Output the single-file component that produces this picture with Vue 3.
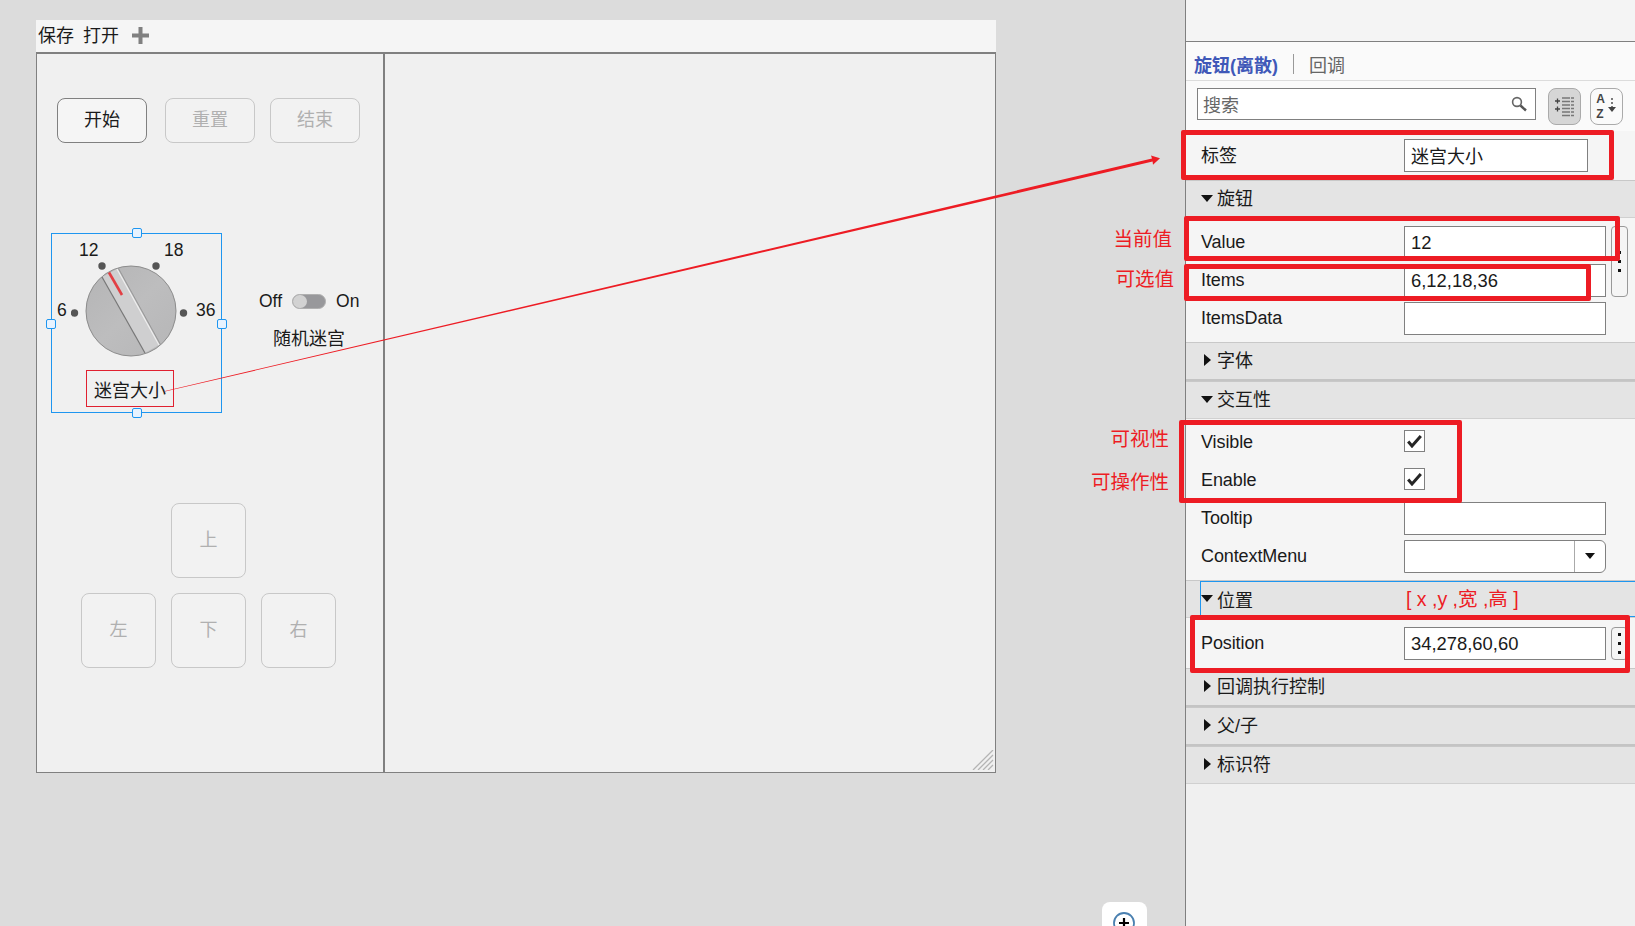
<script setup>
const redBoxes = [
  { left: 1181, top: 130, width: 433, height: 50 },
  { left: 1184, top: 216, width: 436, height: 45 },
  { left: 1184, top: 264, width: 407, height: 37 },
  { left: 1179, top: 420, width: 283, height: 83 },
  { left: 1190, top: 615, width: 440, height: 58 }
]

const notes = [
  { text: '当前值', right: 463, top: 225 },
  { text: '可选值', right: 461, top: 265 },
  { text: '可视性', right: 466, top: 425 },
  { text: '可操作性', right: 466, top: 468 }
]

const closedSections = ['回调执行控制', '父/子']

const boxStyle = (b) => ({
  left: b.left + 'px',
  top: b.top + 'px',
  width: b.width + 'px',
  height: b.height + 'px'
})
</script>

<template>
  <div class="page">
    <div class="workspace">
      <div class="toolbar">
        <span>保存</span>
        <span>打开</span>
        <svg class="plus" width="17" height="17" viewBox="0 0 17 17">
          <path d="M6.5 0h4v6.5H17v4h-6.5V17h-4v-6.5H0v-4h6.5z" fill="#808080" />
        </svg>
      </div>
      <div class="window">
        <div class="left-pane">
          <div class="action-row">
            <button class="btn active">开始</button>
            <button class="btn">重置</button>
            <button class="btn">结束</button>
          </div>
          <div class="control-row">
            <div class="knob-box">
              <i class="handle h-top"></i>
              <i class="handle h-bottom"></i>
              <i class="handle h-left"></i>
              <i class="handle h-right"></i>
              <span class="tick t12">12</span>
              <span class="tick t18">18</span>
              <span class="tick t6">6</span>
              <span class="tick t36">36</span>
              <svg class="knob" width="120" height="104" viewBox="0 0 120 104">
                <defs>
                  <clipPath id="dial"><circle cx="60" cy="57" r="45" /></clipPath>
                  <linearGradient id="dialFill" x1="0" y1="0" x2="1" y2="1">
                    <stop offset="0" stop-color="#b4b4b5" />
                    <stop offset="0.5" stop-color="#bdbdbe" />
                    <stop offset="1" stop-color="#b6b6b7" />
                  </linearGradient>
                </defs>
                <circle cx="3.5" cy="59" r="3.7" fill="#555" />
                <circle cx="31" cy="12" r="3.7" fill="#555" />
                <circle cx="85" cy="12" r="3.7" fill="#555" />
                <circle cx="112.5" cy="59" r="3.7" fill="#555" />
                <circle cx="60" cy="57" r="45" fill="url(#dialFill)" stroke="#8c8c8c" />
                <g clip-path="url(#dial)">
                  <polygon points="31,23 46,15 88,91 74,99" fill="#cfcfd0" />
                  <line x1="31" y1="23" x2="74" y2="99" stroke="#777" stroke-width="1.2" />
                  <line x1="46" y1="15" x2="88" y2="91" stroke="#efefef" stroke-width="1.2" />
                  <line x1="47.5" y1="14.5" x2="89.5" y2="90.5" stroke="#8e8e8e" stroke-width="0.8" />
                </g>
                <line x1="38" y1="18.5" x2="51" y2="41" stroke="#e23f44" stroke-width="2.6" />
              </svg>
              <div class="knob-label">迷宫大小</div>
            </div>
            <div class="switch-block">
              <div class="switch-line">
                <span>Off</span>
                <span class="switch"><span class="switch-thumb"></span></span>
                <span>On</span>
              </div>
              <div class="switch-label">随机迷宫</div>
            </div>
          </div>
          <div class="dpad">
            <button class="btn pad up">上</button>
            <button class="btn pad lf">左</button>
            <button class="btn pad dn">下</button>
            <button class="btn pad rt">右</button>
          </div>
        </div>
        <div class="right-pane">
          <svg class="grip" width="22" height="20" viewBox="0 0 22 20">
            <path d="M1 20L21 0M6 20L21 5M11 20L21 10M16 20L21 15" stroke="#b4b4b4" stroke-width="1.3" fill="none" />
          </svg>
        </div>
      </div>
      <div class="zoom-tab">
        <svg width="24" height="24" viewBox="0 0 24 24">
          <circle cx="12" cy="12" r="10" fill="#fff" stroke="#4a80b0" stroke-width="1.8" />
          <path d="M12 7v10M7 12h10" stroke="#000" stroke-width="2.2" />
        </svg>
      </div>
    </div>

    <aside class="inspector">
      <div class="insp-top"></div>
      <div class="tabs">
        <span class="tab-on">旋钮(离散)</span>
        <i class="tab-sep"></i>
        <span class="tab-off">回调</span>
      </div>
      <div class="search-row">
        <div class="search">
          <span>搜索</span>
          <svg width="16" height="16" viewBox="0 0 16 16">
            <circle cx="6" cy="6" r="4.4" fill="#fff" stroke="#666" stroke-width="1.6" />
            <path d="M9.5 9.5L15 14.5" stroke="#555" stroke-width="2.4" />
          </svg>
        </div>
        <div class="tool-btn pressed">
          <svg width="20" height="20" viewBox="0 0 20 20">
            <path d="M0 4h5M2.5 1.5v5M0 12h5M2.5 9.5v5" stroke="#444" stroke-width="1.3" />
            <path d="M7 1h12M7 4.5h12M7 8h12M7 11.5h12M7 15h12M7 18.5h12" stroke="#777" stroke-width="1.4" stroke-dasharray="8 1" />
          </svg>
        </div>
        <div class="tool-btn">
          <span class="az">A<br />Z</span>
          <svg width="10" height="20" viewBox="0 0 10 20">
            <path d="M5 1v2M5 5v2M5 9v4" stroke="#444" stroke-width="1.4" />
            <path d="M1 10h8L5 15z" fill="#444" />
          </svg>
        </div>
      </div>

      <div class="prop-row tag-row">
        <span>标签</span>
        <div class="field short">迷宫大小</div>
      </div>

      <div class="section"><i class="tri-down"></i>旋钮</div>
      <div class="group knob-group">
        <div class="prop-row"><span>Value</span><div class="field">12</div></div>
        <div class="prop-row"><span>Items</span><div class="field">6,12,18,36</div></div>
        <div class="prop-row"><span>ItemsData</span><div class="field"></div></div>
        <div class="more tall"><b></b><b></b><b></b></div>
      </div>

      <div class="section thick"><i class="tri-right"></i>字体</div>
      <div class="section"><i class="tri-down"></i>交互性</div>
      <div class="group inter-group">
        <div class="prop-row"><span>Visible</span><div class="check"><svg width="15" height="13" viewBox="0 0 15 13"><path d="M1.2 6.5l3.8 4.5L13.8 1" fill="none" stroke="#262626" stroke-width="3" /></svg></div></div>
        <div class="prop-row"><span>Enable</span><div class="check"><svg width="15" height="13" viewBox="0 0 15 13"><path d="M1.2 6.5l3.8 4.5L13.8 1" fill="none" stroke="#262626" stroke-width="3" /></svg></div></div>
        <div class="prop-row"><span>Tooltip</span><div class="field"></div></div>
        <div class="prop-row">
          <span>ContextMenu</span>
          <div class="field combo"><i class="combo-arrow"><i class="tri-down small"></i></i></div>
        </div>
      </div>

      <div class="section selected"><i class="tri-down"></i>位置</div>
      <div class="group pos-group">
        <div class="prop-row"><span>Position</span><div class="field">34,278,60,60</div></div>
        <div class="more"><b></b><b></b><b></b></div>
      </div>

      <div v-for="name in closedSections" :key="name" class="section thick"><i class="tri-right"></i>{{ name }}</div>
      <div class="section"><i class="tri-right"></i>标识符</div>
    </aside>

    <svg class="arrow" width="1635" height="926" viewBox="0 0 1635 926">
      <polygon points="165,390.9 1152,158.6 1151,155.5 1160,158.3 1153,164.8 1152.6,161.6 165,391.6" fill="#ed1c24" />
    </svg>
    <div v-for="(b, i) in redBoxes" :key="i" class="red-box" :style="boxStyle(b)"></div>
    <div v-for="n in notes" :key="n.text" class="note" :style="{ right: n.right + 'px', top: n.top + 'px' }">{{ n.text }}</div>
    <div class="pos-note">[ x ,y ,宽 ,高 ]</div>
  </div>
</template>

<style>
html, body {
  margin: 0;
  background: #dcdcdc;
}
</style>

<style scoped>
* {
  box-sizing: border-box;
}

.page {
  position: relative;
  display: flex;
  width: 1635px;
  height: 926px;
  overflow: hidden;
  background: #dcdcdc;
  color: #1a1a1a;
  font-family: "Liberation Sans", "Noto Sans CJK SC", sans-serif;
  font-size: 18px;
}

.workspace {
  position: relative;
  width: 1185px;
  padding: 20px 0 0 36px;
}

.toolbar {
  display: flex;
  align-items: center;
  gap: 9px;
  width: 960px;
  height: 32px;
  padding: 0 0 4px 2px;
  background: #f5f5f5;
}

.plus {
  margin: 3px 0 0 4px;
}

.window {
  display: flex;
  width: 960px;
  height: 721px;
  border: 1px solid #808080;
  border-top-width: 2px;
  background: #f0f0f0;
}

.left-pane {
  width: 348px;
  border-right: 2px solid #808080;
}

.right-pane {
  position: relative;
  flex: 1;
}

.grip {
  position: absolute;
  right: 1px;
  bottom: 2px;
}

.action-row {
  display: flex;
  gap: 18px;
  padding: 44px 0 0 20px;
}

.action-row .btn:last-child {
  margin-left: -3px;
}

.btn {
  width: 90px;
  height: 45px;
  padding: 0 0 5px;
  border: 1px solid #c8c8c8;
  border-radius: 8px;
  background: #f2f2f2;
  color: #b0b0b0;
  font: inherit;
}

.btn.active {
  border-color: #808080;
  background: #f5f5f5;
  color: #1a1a1a;
}

.control-row {
  display: flex;
  margin-top: 90px;
  padding-left: 14px;
}

.knob-box {
  position: relative;
  width: 171px;
  height: 180px;
  border: 1px solid #1e96f0;
}

.handle {
  position: absolute;
  width: 10px;
  height: 10px;
  border: 1px solid #1e96f0;
  border-radius: 2px;
  background: #e8f3ff;
}

.h-top { left: 80px; top: -6px; }
.h-bottom { left: 80px; bottom: -6px; }
.h-left { left: -6px; top: 85px; }
.h-right { right: -6px; top: 85px; }

.tick {
  position: absolute;
  font-size: 17.5px;
  line-height: 20px;
}

.t12 { left: 27px; top: 6px; }
.t18 { left: 112px; top: 6px; }
.t6 { left: 5px; top: 66px; }
.t36 { left: 144px; top: 66px; }

.knob {
  position: absolute;
  left: 19px;
  top: 20px;
}

.knob-label {
  position: absolute;
  left: 34px;
  top: 136px;
  width: 88px;
  height: 37px;
  border: 1px solid #e02030;
  text-align: center;
  line-height: 41px;
}

.switch-block {
  margin-left: 37px;
  padding-top: 56px;
}

.switch-line {
  display: flex;
  align-items: center;
  gap: 10px;
  height: 24px;
  font-size: 17.5px;
}

.switch {
  display: block;
  width: 34px;
  height: 15px;
  border-radius: 8px;
  background: #98989b;
  border: 1px solid #b0b0b0;
}

.switch-thumb {
  display: block;
  width: 14px;
  height: 13px;
  border-radius: 7px;
  background: #d2d2d2;
}

.switch-label {
  margin-top: 14px;
  padding-left: 14px;
  line-height: 24px;
}

.dpad {
  display: grid;
  grid-template-columns: repeat(3, 75px);
  grid-template-rows: repeat(2, 75px);
  gap: 15px;
  margin: 90px 0 0 44px;
}

.pad {
  width: 75px;
  height: 75px;
  padding-bottom: 5px;
}

.up { grid-column: 2; grid-row: 1; }
.lf { grid-column: 1; grid-row: 2; }
.dn { grid-column: 2; grid-row: 2; }
.rt { grid-column: 3; grid-row: 2; }

.zoom-tab {
  position: absolute;
  left: 1102px;
  top: 902px;
  width: 45px;
  height: 40px;
  padding: 9px 0 0 10px;
  border-radius: 8px;
  background: #fff;
}

.inspector {
  width: 450px;
  border-left: 1px solid #808080;
  background: #f0f0f0;
}

.insp-top {
  height: 42px;
  border-bottom: 1px solid #808080;
  background: #f4f4f4;
}

.tabs {
  display: flex;
  align-items: center;
  height: 39px;
  padding: 5px 0 0 8px;
  border-bottom: 1px solid #dcdcdc;
  background: #fafafa;
}

.tab-on {
  color: #4058b8;
  font-weight: 700;
}

.tab-sep {
  width: 1px;
  height: 20px;
  margin: 0 15px;
  background: #999;
}

.tab-off {
  color: #666;
}

.search-row {
  display: flex;
  height: 50px;
  padding: 7px 0 0 11px;
  background: #fafafa;
}

.search {
  display: flex;
  align-items: center;
  justify-content: space-between;
  width: 339px;
  height: 32px;
  padding: 0 8px 0 5px;
  border: 1px solid #808080;
  background: #fff;
  color: #666;
}

.tool-btn {
  display: flex;
  align-items: center;
  justify-content: center;
  gap: 2px;
  width: 33px;
  height: 37px;
  margin-left: 9px;
  border: 1px solid #aaa;
  border-radius: 8px;
  background: #fafafa;
}

.tool-btn.pressed {
  margin-left: 12px;
  background: #d6d6d6;
}

.az {
  font-size: 12px;
  font-weight: 700;
  line-height: 15px;
  color: #444;
}

.prop-row {
  display: flex;
  align-items: center;
  height: 38px;
  padding-left: 15px;
}

.prop-row > span {
  width: 203px;
  font-size: 18px;
  letter-spacing: -0.1px;
}

.tag-row {
  height: 49px;
  background: #f5f5f5;
}

.tag-row > span {
  padding-bottom: 4px;
}

.field {
  width: 202px;
  height: 33px;
  padding-left: 6px;
  border: 1px solid #808080;
  background: #fff;
  font-size: 18.4px;
  line-height: 32px;
  white-space: nowrap;
}

.field.short {
  width: 184px;
  font-size: 18px;
  line-height: 35px;
}

.section {
  display: flex;
  align-items: center;
  height: 38px;
  padding: 0 0 4px 31px;
  position: relative;
  border-top: 1px solid #c8c8c8;
  border-bottom: 1px solid #d0d0d0;
  background: #e4e4e4;
}

.section.thick {
  height: 39px;
  border-bottom: 2px solid #c4c4c4;
}

.section.selected {
  padding-bottom: 0;
}

.section.selected::before {
  content: "";
  position: absolute;
  left: 14px;
  right: 0;
  top: 0;
  bottom: 0;
  border: 1px solid #1e96f0;
  border-right: 0;
}

.tri-down,
.tri-right {
  position: absolute;
  width: 0;
  height: 0;
}

.tri-down {
  left: 15px;
  top: 14px;
  border-left: 6px solid transparent;
  border-right: 6px solid transparent;
  border-top: 7px solid #111;
}

.tri-down.small {
  position: static;
  display: block;
  border-left-width: 5px;
  border-right-width: 5px;
  border-top-width: 6px;
}

.tri-right {
  left: 18px;
  top: 11px;
  border-top: 6px solid transparent;
  border-bottom: 6px solid transparent;
  border-left: 7px solid #111;
}

.group {
  position: relative;
  background: #f5f5f5;
}

.knob-group {
  padding: 8px 0 2.75px;
}

.knob-group .prop-row {
  height: 37.75px;
  align-items: flex-start;
}

.knob-group .prop-row > span {
  line-height: 33px;
}

.inter-group {
  padding: 4px 0 5px;
}

.pos-group {
  height: 50px;
}

.pos-group .prop-row {
  height: 50px;
}

.more {
  position: absolute;
  left: 425px;
  top: 9px;
  display: flex;
  flex-direction: column;
  align-items: center;
  justify-content: center;
  gap: 6px;
  width: 17px;
  height: 33px;
  border: 1px solid #999;
  border-radius: 4px;
  background: #f5f5f5;
}

.more.tall {
  top: 8px;
  height: 71px;
}

.more b {
  width: 3px;
  height: 3px;
  background: #111;
}

.check {
  display: flex;
  align-items: center;
  justify-content: center;
  width: 21px;
  height: 22px;
  margin-top: -2px;
  border: 1px solid #808080;
  background: #fff;
}

.combo {
  position: relative;
  border-radius: 0 6px 6px 0;
}

.combo-arrow {
  position: absolute;
  right: 0;
  top: 0;
  display: flex;
  align-items: center;
  justify-content: center;
  width: 31px;
  height: 31px;
  border-left: 1px solid #aaa;
}

.arrow {
  position: absolute;
  left: 0;
  top: 0;
  pointer-events: none;
}

.red-box {
  position: absolute;
  border: 5px solid #ed1c24;
  border-radius: 2px;
}

.note {
  position: absolute;
  color: #ed1c24;
  font-size: 19.5px;
  line-height: 28px;
  white-space: nowrap;
}

.pos-note {
  position: absolute;
  left: 1406px;
  top: 586px;
  color: #ed1c24;
  font-size: 19.5px;
  line-height: 26px;
  white-space: nowrap;
}
</style>
